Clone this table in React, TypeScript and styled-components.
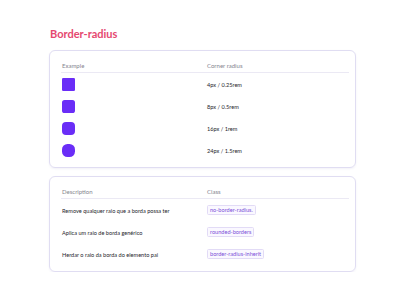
import React from "react";
import styled, { createGlobalStyle } from "styled-components";

const Global = createGlobalStyle`
  html, body { margin: 0; padding: 0; background: #ffffff; }
  body { font-family: Lato, "Open Sans", sans-serif; }
`;

const Page = styled.div`
  width: 307px;
  padding: 27px 0 0 49px;
  display: flex;
  flex-direction: column;
`;

const Title = styled.h1`
  margin: 0 0 9px 1px;
  font-family: Lato, sans-serif;
  font-size: 11px;
  line-height: 14px;
  font-weight: 700;
  color: #e5486f;
`;

const Card = styled.div`
  border: 1px solid #e0ddf2;
  border-radius: 6px;
  box-shadow: 0 1px 2px rgba(90, 80, 160, 0.08);
  padding: 7px 6px 6px 11px;
  & + & { margin-top: 8px; }
`;

const Table = styled.div`
  display: grid;
  grid-template-columns: 145px 1fr;
`;

const HeadCell = styled.div`
  height: 14px;
  display: flex;
  align-items: center;
  padding-left: 1px;
  font-size: 6px;
  color: #85858f;
  border-bottom: 1px solid #ebe9f4;
`;

const Cell = styled.div`
  height: 22px;
  display: flex;
  align-items: center;
  padding-left: 1px;
  font-size: 5.6px;
  color: #26262c;
`;

const Swatch = styled.div<{ $r: number }>`
  width: 13px;
  height: 13px;
  background: #6a2df7;
  border-radius: ${(p) => p.$r}px;
`;

const Badge = styled.span`
  display: inline-block;
  padding: 1px 2px;
  font-size: 5.6px;
  line-height: 6px;
  color: #7b4fd8;
  background: #faf8ff;
  border: 1px solid #e2dbf6;
  border-radius: 1.5px;
`;

const radii = [
  { r: 1.3, label: "4px / 0.25rem" },
  { r: 2.6, label: "8px / 0.5rem" },
  { r: 4, label: "16px / 1rem" },
  { r: 5.5, label: "24px / 1.5rem" },
];

const classes = [
  { d: "Remove qualquer raio que a borda possa ter", c: "no-border-radius." },
  { d: "Aplica um raio de borda genérico", c: "rounded-borders" },
  { d: "Herdar o raio da borda do elemento pai", c: "border-radius-inherit" },
];

export default function App() {
  return (
    <>
      <Global />
      <Page>
        <Title>Border-radius</Title>
        <Card>
          <Table>
            <HeadCell>Example</HeadCell>
            <HeadCell>Corner radius</HeadCell>
            {radii.map((x) => (
              <React.Fragment key={x.label}>
                <Cell>
                  <Swatch $r={x.r} />
                </Cell>
                <Cell>{x.label}</Cell>
              </React.Fragment>
            ))}
          </Table>
        </Card>
        <Card>
          <Table>
            <HeadCell>Description</HeadCell>
            <HeadCell>Class</HeadCell>
            {classes.map((x) => (
              <React.Fragment key={x.c}>
                <Cell>{x.d}</Cell>
                <Cell>
                  <Badge>{x.c}</Badge>
                </Cell>
              </React.Fragment>
            ))}
          </Table>
        </Card>
      </Page>
    </>
  );
}
